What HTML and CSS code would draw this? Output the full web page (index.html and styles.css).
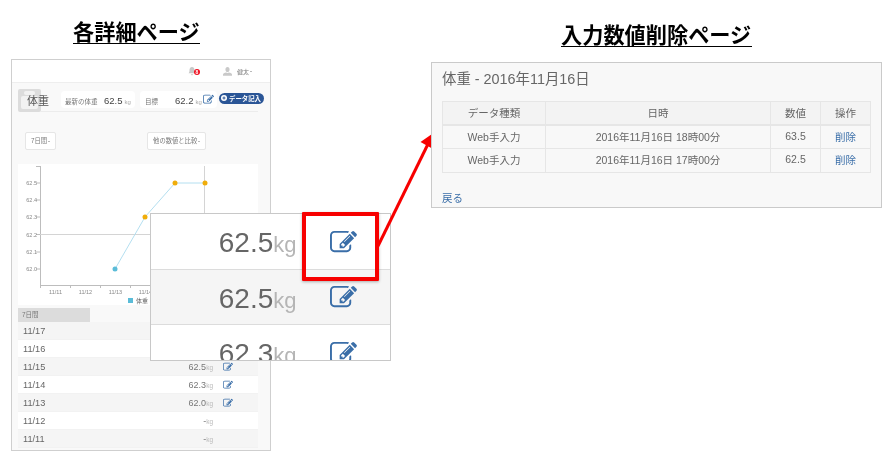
FILE: index.html
```html
<!DOCTYPE html>
<html lang="ja">
<head>
<meta charset="utf-8">
<title>各詳細ページ</title>
<link rel="stylesheet" href="styles.css">
</head>
<body>
<svg class="defs" width="0" height="0" aria-hidden="true">
  <symbol id="edit" viewBox="0 0 1792 1792">
    <path d="M888 1184l116-116-152-152-116 116v56h96v96h56zm440-720q-16-16-33 1l-350 350q-17 17-1 33t33-1l350-350q17-17 1-33zm80 594v190q0 119-84.5 203.5t-203.5 84.5h-832q-119 0-203.5-84.5t-84.5-203.5v-832q0-119 84.5-203.5t203.5-84.5h832q63 0 117 25 15 7 18 23 3 17-9 29l-49 49q-14 14-32 8-23-6-45-6h-832q-66 0-113 47t-47 113v832q0 66 47 113t113 47h832q66 0 113-47t47-113v-126q0-13 9-22l64-64q15-15 35-7t20 29zm-96-738l288 288-672 672h-288v-288zm444 132l-92 92-288-288 92-92q28-28 68-28t68 28l152 152q28 28 28 68t-28 68z"/>
  </symbol>
</svg>

<main class="canvas">
  <h1 class="heading heading-left">各詳細ページ</h1>
  <h1 class="heading heading-right">入力数値削除ページ</h1>

  <section class="app">
    <header class="topbar">
      <span class="bell">
        <svg width="8" height="9" viewBox="0 0 9 10"><path class="fill-grey" d="M4.5 0C6.5 0 7.3 1.600 7.300 3.500c0 2 .7 3 1.200 3.500H.5C1 6.500 1.700 5.500 1.700 3.500 1.700 1.600 2.500 0 4.500 0zM3.300 8h2.400c0 .8-.5 1.300-1.200 1.300S3.300 8.800 3.300 8z"/></svg>
        <b class="badge">8</b>
      </span>
      <span class="user">
        <svg width="9" height="9" viewBox="0 0 10 10"><path class="fill-grey" d="M5 0c1.500 0 2.300 1.100 2.300 2.700C7.300 4.100 6.500 5.600 5 5.600S2.700 4.100 2.700 2.700C2.700 1.100 3.500 0 5 0zM0 9.800V8.400c0-1 1.700-1.700 3.400-2.200.9.700 2.300.7 3.200 0C8.300 6.700 10 7.400 10 8.400v1.400z"/></svg>
        <span class="user-name">健太<i class="caret"></i></span>
      </span>
    </header>

    <div class="app-body">
      <div class="titlebar">
        <div class="scale"><span class="scale-dial"></span><span class="scale-top"></span></div>
        <h2 class="app-title">体重</h2>
        <div class="stat stat-latest"><span class="stat-label">最新の体重</span><span class="stat-value">62.5</span><span class="stat-unit">kg</span></div>
        <div class="stat stat-goal"><span class="stat-label">目標</span><span class="stat-value">62.2</span><span class="stat-unit">kg</span><svg class="icon icon-goal"><use href="#edit"/></svg></div>
        <div class="add-btn"><svg class="add-dot" width="6" height="6" viewBox="0 0 6 6"><circle cx="3" cy="3" r="3" fill="#fff"/><path d="M3 1.500v3M1.500 3h3" stroke="#2a5596"/></svg>データ記入</div>
      </div>

      <div class="filters">
        <span class="select">7日間<i class="caret"></i></span>
        <span class="select select-compare">他の数値と比較<i class="caret"></i></span>
      </div>

      <svg class="chart" width="240" height="141" viewBox="0 0 240 141">
        <g class="chart-grid">
          <path d="M22.500 2V121.500H240"/>
          <path d="M18 19h4M18 36h4M18 53h4M18 70.500h4M18 88h4M18 105h4M18 2.500h4"/>
          <path d="M22.500 121v3M52.500 121v3M82.500 121v3M112.500 121v3M142.500 121v3M172.500 121v3M202.500 121v3M232.500 121v3"/>
        </g>
        <g class="chart-cross">
          <path d="M22 70.500H240M186.500 2V121"/>
        </g>
        <g class="chart-y">
          <text x="19" y="21">62.5</text>
          <text x="19" y="38">62.4</text>
          <text x="19" y="55">62.3</text>
          <text x="19" y="72.500">62.2</text>
          <text x="19" y="90">62.1</text>
          <text x="19" y="107">62.0</text>
        </g>
        <g class="chart-x">
          <text x="37.500" y="129.500">11/11</text>
          <text x="67.500" y="129.500">11/12</text>
          <text x="97.500" y="129.500">11/13</text>
          <text x="127.500" y="129.500">11/14</text>
        </g>
        <polyline class="chart-line" points="97,105 127,53 157,19 187,19"/>
        <circle class="dot-blue" cx="97" cy="105" r="2.500"/>
        <circle class="dot-orange" cx="127" cy="53" r="2.500"/>
        <circle class="dot-orange" cx="157" cy="19" r="2.500"/>
        <circle class="dot-orange" cx="187" cy="19" r="2.500"/>
        <rect class="dot-blue" x="110" y="134" width="5" height="5"/>
        <text class="chart-legend" x="118" y="139">体重</text>
      </svg>

      <div class="tab">7日間</div>
      <ul class="rows">
        <li class="row"><span class="row-date">11/17</span></li>
        <li class="row"><span class="row-date">11/16</span></li>
        <li class="row"><span class="row-date">11/15</span><span class="row-value">62.5<small>kg</small></span><svg class="icon icon-row"><use href="#edit"/></svg></li>
        <li class="row"><span class="row-date">11/14</span><span class="row-value">62.3<small>kg</small></span><svg class="icon icon-row"><use href="#edit"/></svg></li>
        <li class="row"><span class="row-date">11/13</span><span class="row-value">62.0<small>kg</small></span><svg class="icon icon-row"><use href="#edit"/></svg></li>
        <li class="row"><span class="row-date">11/12</span><span class="row-value">-<small>kg</small></span><span class="icon-row"></span></li>
        <li class="row"><span class="row-date">11/11</span><span class="row-value">-<small>kg</small></span><span class="icon-row"></span></li>
      </ul>
    </div>
  </section>

  <section class="zoom">
    <div class="zoom-row"><span class="zoom-value">62.5<small>kg</small></span><svg class="icon icon-zoom"><use href="#edit"/></svg></div>
    <div class="zoom-row"><span class="zoom-value">62.5<small>kg</small></span><svg class="icon icon-zoom"><use href="#edit"/></svg></div>
    <div class="zoom-row"><span class="zoom-value">62.3<small>kg</small></span><svg class="icon icon-zoom"><use href="#edit"/></svg></div>
  </section>

  <div class="highlight"></div>
  <svg class="arrow" width="70" height="125" viewBox="0 0 70 125">
    <path d="M6 115L57 11"/>
    <path class="arrow-head" d="M60 3L61 18 48.500 11z"/>
  </svg>

  <section class="detail">
    <h2 class="detail-title">体重 - 2016年11月16日</h2>
    <table class="detail-table">
      <thead>
        <tr><th class="col-type">データ種類</th><th class="col-date">日時</th><th class="col-num">数値</th><th class="col-op">操作</th></tr>
      </thead>
      <tbody>
        <tr><td>Web手入力</td><td>2016年11月16日 18時00分</td><td>63.5</td><td><a href="#">削除</a></td></tr>
        <tr><td>Web手入力</td><td>2016年11月16日 17時00分</td><td>62.5</td><td><a href="#">削除</a></td></tr>
      </tbody>
    </table>
    <a class="back" href="#">戻る</a>
  </section>
</main>
</body>
</html>
```
FILE: styles.css
```css
* { box-sizing: border-box; }
html, body { margin: 0; padding: 0; background: #fff; }
body {
  font-family: "Liberation Sans", "Noto Sans CJK JP", sans-serif;
  color: #555;
  overflow: hidden;
}
.defs { position: absolute; }
.canvas { position: relative; width: 893px; height: 458px; overflow: hidden; }
.icon { fill: #3a6ea8; display: block; }
.fill-grey { fill: #c9c9c9; }

.heading {
  position: absolute;
  margin: 0;
  font-family: "Noto Sans CJK JP", sans-serif;
  font-size: 21.200px;
  line-height: 24px;
  font-weight: 700;
  color: #000;
  white-space: nowrap;
  border-bottom: 1.500px solid #000;
  filter: blur(.25px);
}
.heading-left { left: 73px; top: 19px; width: 127px; }
.heading-right { left: 561px; top: 22px; width: 191px; }

/* left window */
.app {
  position: absolute;
  left: 11px; top: 59px;
  width: 260px; height: 392px;
  border: 1px solid #cfcfcf;
  background: #f9f9f9;
  overflow: hidden;
  filter: blur(.45px);
}
.topbar {
  height: 23px;
  background: #fff;
  border-bottom: 1px solid #eee;
  display: flex;
  align-items: center;
  padding-left: 176px;
}
.bell { position: relative; width: 9px; height: 9px; display: block; }
.bell svg { display: block; }
.badge {
  position: absolute;
  left: 6px; top: 2.500px;
  width: 6px; height: 6px;
  border-radius: 50%;
  background: #f01020;
  color: #fff;
  font-size: 5px;
  line-height: 6px;
  text-align: center;
}
.user { display: flex; align-items: center; margin-left: 26px; }
.user-name { margin-left: 5px; font-size: 6px; color: #777; white-space: nowrap; }
.caret {
  display: inline-block;
  margin-left: 1px;
  vertical-align: middle;
  border-top: 1.500px solid #777;
  border-left: 1.500px solid transparent;
  border-right: 1.500px solid transparent;
}
.app-body { padding-left: 6px; }

.titlebar {
  position: relative;
  width: 240px;
  height: 29px;
  display: flex;
  align-items: center;
}
.scale {
  position: absolute;
  left: 0; top: 6px;
  width: 23px; height: 23px;
  border-radius: 2px;
  background: #dcdcdc;
  display: flex;
  justify-content: center;
}
.scale-dial {
  position: absolute;
  left: 3px; top: 7px;
  width: 17px; height: 13px;
  border-radius: 2px;
  background: #f2f2f2;
}
.scale-top {
  position: absolute;
  left: 6px; top: 2px;
  width: 11px; height: 4px;
  border-radius: 2px;
  background: #f2f2f2;
}
.app-title {
  position: relative;
  margin: 4px 0 0 9px;
  width: 34px;
  flex: none;
  font-size: 11px;
  font-weight: 400;
  color: #555;
}
.titlebar::after {
  content: "";
  position: absolute;
  left: 22px; right: 0; bottom: 0;
  height: 1px;
  background: #ececec;
}
.stat {
  display: flex;
  align-items: baseline;
  height: 17px;
  margin-top: 4px;
  padding-top: 4px;
  background: #fff;
  border-radius: 4px;
  white-space: nowrap;
  flex: none;
}
.stat-latest { width: 74px; padding-left: 4px; }
.stat-goal { position: relative; width: 77px; margin-left: 5px; padding-left: 5px; }
.stat-label { font-size: 6.500px; color: #777; }
.stat-latest .stat-label { width: 39px; }
.stat-goal .stat-label { width: 30px; }
.stat-value { font-size: 9.500px; color: #444; font-weight: 500; }
.stat-unit { margin-left: 2px; font-size: 6px; color: #aaa; }
.icon-goal { position: absolute; right: 3px; top: 3px; width: 11px; height: 11px; }
.add-btn {
  height: 11px;
  width: 45px;
  margin: 1px 0 0 2px;
  flex: none;
  border-radius: 6px;
  background: #2a5596;
  color: #fff;
  font-size: 6.400px;
  line-height: 11px;
  font-weight: 700;
  display: flex;
  align-items: center;
  white-space: nowrap;
}
.add-dot { margin: 0 2px 0 2px; flex: none; }

.filters { display: flex; height: 18px; margin: 20px 0 14px 7px; }
.select {
  height: 18px;
  padding: 0 5px;
  background: #fff;
  border: 1px solid #e6e6e6;
  border-radius: 2px;
  font-size: 6.300px;
  line-height: 16px;
  color: #777;
  white-space: nowrap;
}
.select-compare { margin-left: 91px; }

.chart { display: block; background: #fff; }
.chart-grid path { fill: none; stroke: #bdbdbd; stroke-width: 1; }
.chart-cross path { fill: none; stroke: #d4d4d4; stroke-width: 1; }
.chart-y text, .chart-x text, .chart-legend { font-size: 5.500px; fill: #888; }
.chart-y text { text-anchor: end; }
.chart-x text { text-anchor: middle; }
.chart-legend { font-size: 6px; fill: #666; }
.chart-line { fill: none; stroke: #b4dff0; stroke-width: 1; }
.dot-blue { fill: #5bbcd8; }
.dot-orange { fill: #f0ad0a; }

.tab {
  width: 72px; height: 14px;
  margin-top: 3px;
  padding-left: 4px;
  background: #dcdcdc;
  font-size: 6.500px;
  line-height: 14px;
  color: #777;
}
.rows { margin: 0; padding: 0; list-style: none; width: 240px; }
.row {
  height: 18px;
  display: flex;
  align-items: center;
  padding-left: 5px;
  background: #fff;
  border-bottom: 1px solid #f2f2f2;
}
.row:nth-child(odd) { background: #f5f5f5; }
.row-date { flex: 1; font-size: 9.200px; color: #666; }
.row-value { font-size: 9px; color: #777; }
.row-value small { font-size: 6.500px; color: #bbb; }
.icon-row { width: 10px; height: 10px; margin: 0 25px 0 10px; }

/* magnified rows */
.zoom {
  position: absolute;
  left: 150px; top: 213px;
  width: 240.500px; height: 147.500px;
  border: 1px solid #c8c8c8;
  background: #fff;
  overflow: hidden;
  filter: blur(.4px);
}
.zoom-row {
  height: 55.500px;
  padding-right: 33px;
  display: flex;
  align-items: center;
  justify-content: flex-end;
  background: #fff;
  border-bottom: 1px solid #dcdcdc;
}
.zoom-row:nth-child(2) { background: #f5f5f5; }
.zoom-value { font-size: 28px; line-height: 32px; color: #666; margin-top: 6px; }
.zoom-value small { font-size: 22px; color: #b5b5b5; }
.icon-zoom { width: 27px; height: 27px; margin: 2px 0 0 33px; }

.highlight {
  position: absolute;
  left: 302px; top: 212px;
  width: 77px; height: 69px;
  border: 4px solid #f70000;
  border-radius: 1px;
  box-shadow: 0 1px 3px rgba(0,0,0,.3);
}
.arrow { position: absolute; left: 372px; top: 131px; }
.arrow path { fill: none; stroke: #f70000; stroke-width: 3px; }
.arrow .arrow-head { fill: #f70000; stroke: none; }

/* right window */
.detail {
  position: absolute;
  left: 431px; top: 62px;
  width: 450.500px; height: 146px;
  padding: 0 9px 0 10px;
  background: #f8f8f8;
  border: 1px solid #cacaca;
  filter: blur(.3px);
}
.detail-title {
  margin: 0;
  height: 38px;
  font-size: 14.400px;
  line-height: 32px;
  font-weight: 400;
  color: #666;
  white-space: nowrap;
}
.detail-table {
  width: 428px;
  border-collapse: collapse;
  table-layout: fixed;
  font-size: 10.500px;
  color: #666;
}
.detail-table th, .detail-table td {
  height: 23.500px;
  padding: 0 0 2px;
  text-align: center;
  border: 1px solid #e6e6e6;
  font-weight: 400;
}
.detail-table th { background: #f3f3f3; border-bottom-width: 2px; }
.col-type { width: 103px; }
.col-date { width: 225px; }
.col-num { width: 50px; }
.col-op { width: 50px; }
.detail-table a, .back { color: #3a6ea8; text-decoration: none; }
.back { display: block; margin-top: 17px; font-size: 10.500px; line-height: 16px; }
```
